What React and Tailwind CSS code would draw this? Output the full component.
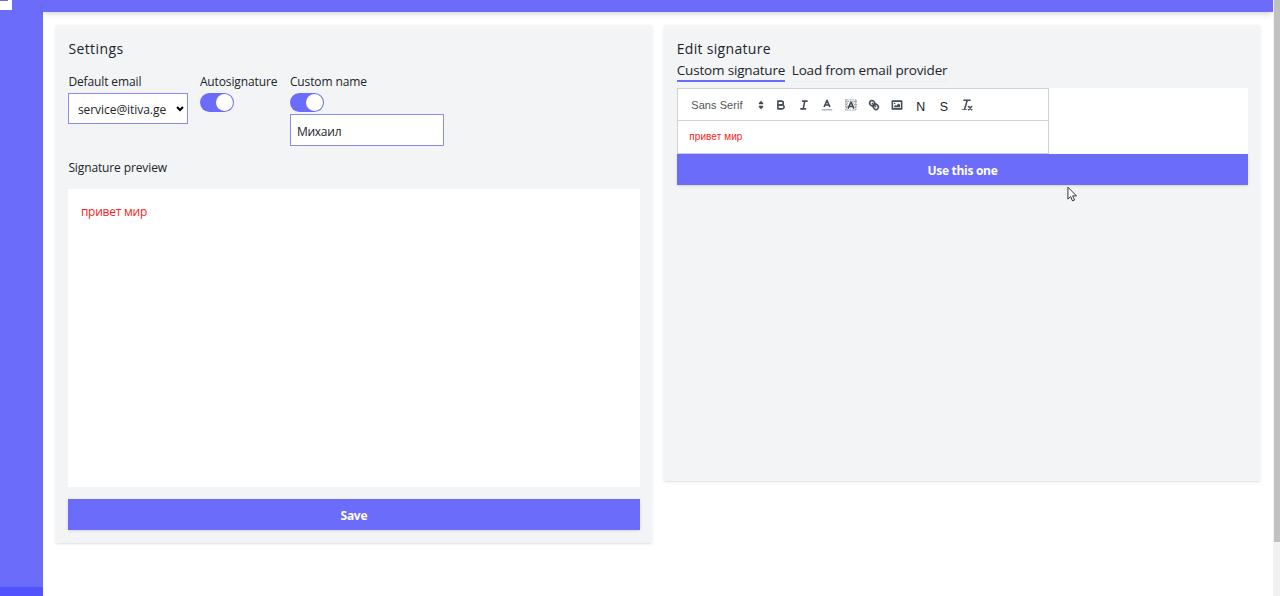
import React from 'react';

function Glyph({ children }) {
  return (
    <svg
      viewBox="0 0 18 18"
      className="h-[14px] w-[14px] shrink-0 fill-none stroke-[#444b55] stroke-2"
      strokeLinecap="round"
      strokeLinejoin="round"
    >
      {children}
    </svg>
  );
}

function Tool({ children }) {
  return <div className="flex h-5 w-[23.3px] shrink-0 items-center justify-center">{children}</div>;
}

function Toggle() {
  return (
    <div className="flex h-[19px] w-[34px] items-center justify-end rounded-full bg-[#6c6cfb] pr-px">
      <div className="h-[16.5px] w-[16.5px] rounded-full bg-white" />
    </div>
  );
}

function Button({ children }) {
  return (
    <button className="block h-[31px] w-full bg-[#6c6cfb] pt-[2px] text-[12px] font-bold leading-[29px] tracking-[-0.3px] text-white shadow">
      {children}
    </button>
  );
}

function Toolbar() {
  return (
    <div className="flex h-8 items-center border-b border-[#d0d2d4] pl-[13.5px]">
      <div className="w-[62.5px] pt-px font-['Liberation_Sans',sans-serif] text-[11px] tracking-[0.05px] text-[#555]">
        Sans Serif
      </div>
      <div className="mr-[1.4px] flex w-[14px]">
        <Glyph>
          <polygon points="7 11 9 13 11 11 7 11" />
          <polygon points="7 7 9 5 11 7 7 7" />
        </Glyph>
      </div>
      <Tool>
        <Glyph>
          <path d="M5,4H9.5A2.5,2.5,0,0,1,12,6.5v0A2.5,2.5,0,0,1,9.5,9H5V4Z" />
          <path d="M5,9h5.5A2.5,2.5,0,0,1,13,11.5v0A2.5,2.5,0,0,1,10.5,14H5V9Z" />
        </Glyph>
      </Tool>
      <Tool>
        <Glyph>
          <path d="M7 4H13M5 14H11M8 14L10 4" />
        </Glyph>
      </Tool>
      <Tool>
        <Glyph>
          <path d="M3 15H15" opacity="0.4" />
          <path d="M5.5 11L9 3L12.5 11M11.63 9H6.38" />
        </Glyph>
      </Tool>
      <Tool>
        <Glyph>
          <g strokeWidth="1" strokeLinecap="butt" strokeDasharray="1 1">
            <path d="M2 2.5H16M3 4.5H7M11 4.5H16M2 6.5H6M12 6.5H16M3 8.5H5M13 8.5H16M2 10.5H5M14 10.5H16M3 12.5H5M14 12.5H16M2 15.5H16" />
            <path d="M2.5 2V16M15.5 2V16" />
          </g>
          <path d="M5.5 13L9 5L12.5 13M11.63 11H6.38" />
        </Glyph>
      </Tool>
      <Tool>
        <Glyph>
          <path d="M7 7L11 11" />
          <path d="M8.9,4.577a3.476,3.476,0,0,1,.36,4.679A3.476,3.476,0,0,1,4.577,8.9C3.185,7.5,2.035,6.4,4.217,4.217S7.5,3.185,8.9,4.577Z" />
          <path d="M13.423,9.1a3.476,3.476,0,0,0-4.679-.36,3.476,3.476,0,0,0,.36,4.679c1.392,1.392,2.5,2.542,4.679.36S14.815,10.5,13.423,9.1Z" />
        </Glyph>
      </Tool>
      <Tool>
        <Glyph>
          <rect x="3" y="4" width="12" height="10" />
          <circle cx="6" cy="7" r="1" className="fill-[#444b55] stroke-none" />
          <polyline points="5 12 5 11 7 9 8 10 11 7 13 9 13 12 5 12" className="fill-[#444b55] stroke-none" />
        </Glyph>
      </Tool>
      <Tool>
        <span className="pt-[5px] font-['Liberation_Sans',sans-serif] text-[12.4px] leading-none text-[#222]">N</span>
      </Tool>
      <Tool>
        <span className="pt-[5px] font-['Liberation_Sans',sans-serif] text-[12.4px] leading-none text-[#222]">S</span>
      </Tool>
      <Tool>
        <Glyph>
          <path d="M5 3H13M6 14L9.35 3" />
          <path d="M11 11L15 15M15 11L11 15" />
          <rect x="2" y="14" width="7" height="1" rx="0.5" className="fill-[#444b55] stroke-none" />
        </Glyph>
      </Tool>
    </div>
  );
}

function SettingsCard() {
  return (
    <section className="h-[518px] w-[596px] bg-[#f2f4f6] px-3 pt-[14px] shadow">
      <h2 className="h-5 pl-[0.5px] text-[14px] leading-5 tracking-[0.4px]">Settings</h2>
      <div className="mt-[13px] flex h-[75px] gap-3 text-[12px] leading-[18px] tracking-[-0.12px]">
        <div className="w-[120px]">
          <div className="mb-[2px] pl-[0.5px] pt-px">Default email</div>
          <div className="flex h-[31px] items-center justify-between border border-[#8b8bee] bg-white pl-[9px] pr-[3px]">
            <span className="pt-[2px] tracking-[-0.05px]">service@itiva.ge</span>
            <svg viewBox="0 0 8 6" className="h-[6px] w-2 fill-none stroke-black stroke-2">
              <path d="M1 1L4 4L7 1" />
            </svg>
          </div>
        </div>
        <div className="w-[78px] whitespace-nowrap">
          <div className="mb-[2px] pt-px">Autosignature</div>
          <Toggle />
        </div>
        <div className="w-[154px]">
          <div className="mb-[2px] pt-px">Custom name</div>
          <Toggle />
          <div className="mt-[2px] h-8 border border-[#8b8bee] bg-white pl-[6px] pt-px leading-[32px] tracking-[-0.25px]">
            Михаил
          </div>
        </div>
      </div>
      <div className="mt-[12px] h-[18px] pl-[0.5px] text-[12px] leading-[18px] tracking-[-0.12px]">Signature preview</div>
      <div className="mb-3 mt-3 h-[298px] bg-white pl-[13px] pt-[14px] text-[12px] leading-[18px] tracking-[-0.25px] text-[#f22]">
        привет мир
      </div>
      <Button>Save</Button>
    </section>
  );
}

function SignatureCard() {
  return (
    <section className="h-[456px] w-[596px] bg-[#f2f4f6] pl-[12.5px] pr-3 pt-[14px] shadow">
      <h2 className="h-5 text-[14px] leading-5 tracking-[0.3px]">Edit signature</h2>
      <div className="flex h-[29px] gap-[7px] pt-px text-[13.5px] leading-[21px] tracking-[-0.18px]">
        <div className="h-[22px] w-[108px] whitespace-nowrap border-b-2 border-[#6c6cfb]">Custom signature</div>
        <div className="h-[22px] w-[156px] whitespace-nowrap border-b border-[#eceef0]">Load from email provider</div>
      </div>
      <div className="h-[66px] bg-white">
        <div className="h-[66px] w-[372px] border border-[#d0d2d4]">
          <Toolbar />
          <div className="pl-[11.5px] font-['Liberation_Sans',sans-serif] text-[10px] leading-[32px] tracking-[0.08px] text-[#f22]">
            привет мир
          </div>
        </div>
      </div>
      <Button>Use this one</Button>
    </section>
  );
}

export default function App() {
  return (
    <div className="relative flex h-[596px] w-[1280px] overflow-hidden bg-white font-['Open_Sans',sans-serif] text-[#212529]">
      <aside className="flex w-[43px] shrink-0 flex-col justify-between bg-[#6c6cfb]">
        <div className="h-[10px] w-3 bg-white">
          <div className="h-px w-2 bg-[#6c6cfb]" />
        </div>
        <div className="h-[9px] bg-[#5252ff]" />
      </aside>
      <div className="flex w-[1230px] shrink-0 flex-col">
        <header className="h-3 shrink-0 bg-[#6c6cfb] shadow-md" />
        <main className="flex items-start gap-[12.4px] pl-[12.9px] pt-[13px]">
          <SettingsCard />
          <SignatureCard />
        </main>
      </div>
      <div className="flex w-[7px] shrink-0 flex-col bg-[#f1f1f1] pl-px">
        <div className="h-[542px] bg-[#c1c1c1]" />
      </div>
      <svg
        viewBox="0 0 12 18"
        className="absolute left-[1067px] top-[186px] h-[17px] w-[11px] fill-white stroke-[#222]"
      >
        <path d="M1 1V14L4 11.2L6 16L8.2 15L6.2 10.5H10.3Z" />
      </svg>
    </div>
  );
}
